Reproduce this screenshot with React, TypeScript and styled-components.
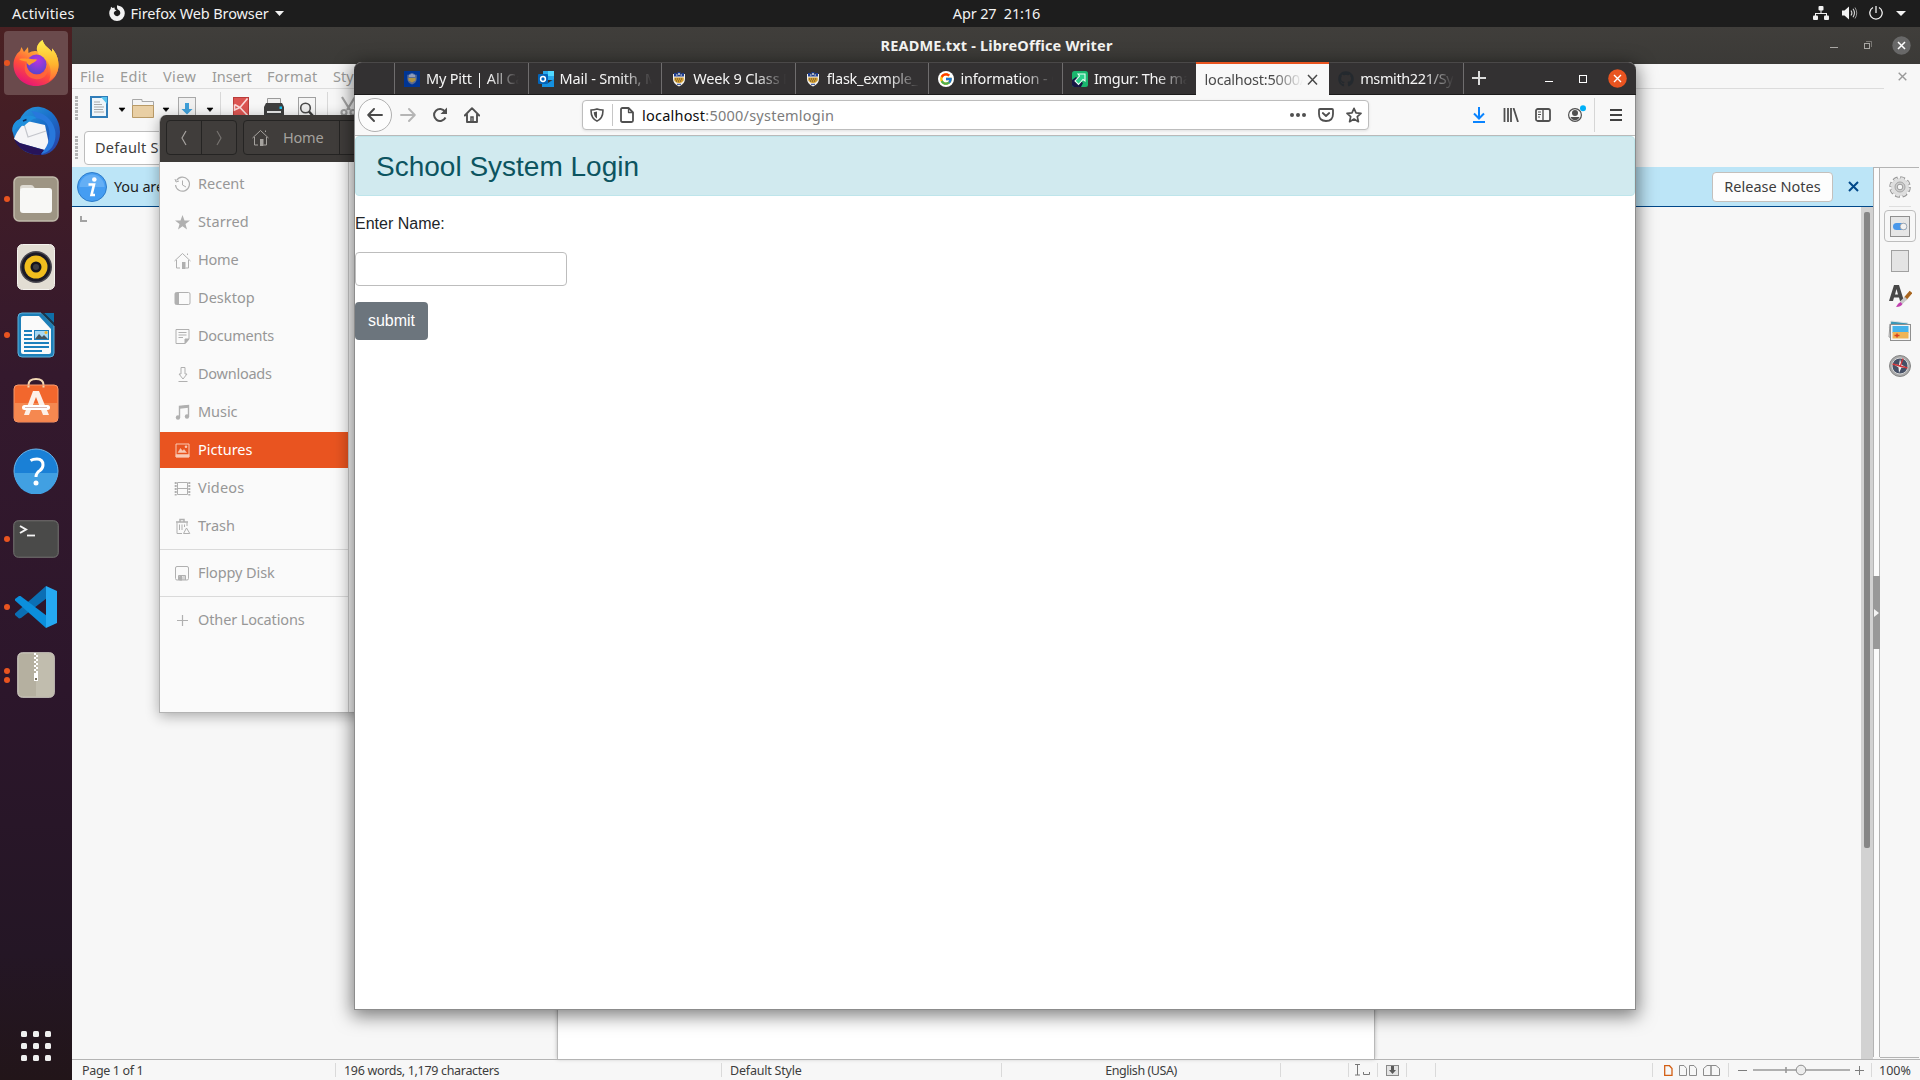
import React from "react";
import styled, { createGlobalStyle, css } from "styled-components";
import { FcGoogle } from "react-icons/fc";
import { FaGithub } from "react-icons/fa";

const Global = createGlobalStyle`
  html, body { margin: 0; padding: 0; overflow: hidden; background: #2c1628; }
  * { box-sizing: border-box; }
  svg { display: block; flex: none; }
`;

const UI_FONT = `"Noto Sans", "Open Sans", sans-serif`;

const Screen = styled.div`
  position: relative;
  width: 1920px;
  height: 1080px;
  overflow: hidden;
  display: flex;
  flex-direction: column;
  font-family: ${UI_FONT};
  font-size: 14.5px;
  line-height: 20px;
  white-space: pre;
`;

const Label = styled.span<{ $ls?: number }>`
  letter-spacing: ${(p) => p.$ls ?? 0}px;
  white-space: pre;
`;

/* ---------- Top panel ---------- */
const Panel = styled.header`
  height: 27px;
  flex: none;
  background: #1d1d1d;
  color: #f2f2f2;
  display: grid;
  grid-template-columns: 1fr auto 1fr;
  align-items: center;
  padding: 0 14px 1px 12px;
`;
const PanelLeft = styled.div`
  display: flex;
  align-items: center;
`;
const AppMenu = styled.div`
  display: flex;
  align-items: center;
  margin-left: 34px;
  gap: 6px;
`;
const Clock = styled.div`
  padding-left: 75px;
`;
const PanelRight = styled.div`
  display: flex;
  align-items: center;
  justify-content: flex-end;
`;
const Gap = styled.span<{ $w: number }>`
  flex: none;
  width: ${(p) => p.$w}px;
`;

/* ---------- Dock ---------- */
const Body = styled.div`
  flex: 1;
  display: flex;
  min-height: 0;
`;
const DockBar = styled.nav`
  width: 72px;
  flex: none;
  display: flex;
  flex-direction: column;
  align-items: center;
  padding: 4px 0 2px;
  gap: 4px;
  background: linear-gradient(#4a2022 0%, #3e1c28 17%, #34192d 33%, #2c162b 63%, #241625 88%, #221519 100%);
`;
const DockTile = styled.div<{ $active?: boolean; $last?: boolean }>`
  position: relative;
  width: 64px;
  height: 64px;
  border-radius: 4px;
  display: flex;
  align-items: center;
  justify-content: center;
  ${(p) => p.$active && css`background: #6a4a4c;`}
  ${(p) => p.$last && css`margin-top: auto;`}
`;
const RunDots = styled.div`
  position: absolute;
  left: 0;
  top: 0;
  bottom: 0;
  display: flex;
  flex-direction: column;
  justify-content: center;
  gap: 3px;
`;
const RunDot = styled.i`
  width: 6px;
  height: 6px;
  border-radius: 50%;
  background: #e95420;
`;

/* ---------- Writer ---------- */
const Writer = styled.main`
  flex: 1;
  min-width: 0;
  display: flex;
  flex-direction: column;
  background: #f7f7f7;
`;
const WriterTitle = styled.div`
  height: 37px;
  flex: none;
  display: grid;
  grid-template-columns: 1fr auto 1fr;
  align-items: center;
  padding: 0 9px 1px 0;
  background: linear-gradient(#403e3b, #3b3a37);
  color: #f4f4f2;
  font-weight: 700;
`;
const TitleText = styled.div`
  grid-column: 2;
  padding-left: 10px;
`;
const TitleButtons = styled.div`
  display: flex;
  justify-content: flex-end;
  align-items: center;
`;
const WriterMenu = styled.div`
  height: 24px;
  flex: none;
  display: flex;
  justify-content: space-between;
`;
const MenuItems = styled.div`
  width: 1812px;
  height: 25px;
  border-bottom: 1px solid #dcdcdc;
  display: flex;
  align-items: center;
  padding-left: 8px;
  color: #9b9b99;
`;
const MenuItem = styled.div<{ $w: number; $ls: number }>`
  width: ${(p) => p.$w}px;
  letter-spacing: ${(p) => p.$ls}px;
`;
const MenuClose = styled.div`
  width: 36px;
  display: flex;
  align-items: center;
  justify-content: center;
`;
const ToolRow = styled.div`
  height: 39px;
  flex: none;
  padding: 8px 0 0 3px;
  display: flex;
  align-items: flex-start;
`;
const ToolRule = styled.div`
  width: 1px;
  height: 32px;
  margin-top: -4px;
  background: #d8d8d8;
`;
const FormatRow = styled.div`
  height: 40px;
  flex: none;
  display: flex;
  align-items: center;
  padding: 1px 0 0 3px;
`;
const Handle = styled.div`
  width: 3px;
  height: 24px;
  background: repeating-linear-gradient(#b4b4b4 0 2.500px, #f7f7f7 2.500px 3.500px);
`;
const StyleBox = styled.div`
  margin-left: 6px;
  width: 240px;
  height: 34px;
  border: 1px solid #bdbdbd;
  border-radius: 4px;
  background: #fff;
  color: #3d3d3d;
  padding: 5px 10px;
`;
const Work = styled.div`
  flex: 1;
  display: flex;
  min-height: 0;
`;
const DocColumn = styled.div`
  width: 1801px;
  flex: none;
  display: flex;
  flex-direction: column;
`;
const InfoBar = styled.div`
  height: 40px;
  flex: none;
  background: #bce5f7;
  border-bottom: 1px solid #00488a;
  display: flex;
  align-items: center;
  padding: 0 12px 0 5px;
  color: #1c1c1c;
`;
const InfoText = styled.div`
  padding: 0 0 2px 7px;
  letter-spacing: -0.15px;
`;
const ReleaseButton = styled.div`
  margin-left: auto;
  width: 121px;
  height: 30px;
  border: 1px solid #c4c0bc;
  border-radius: 4px;
  background: #fdfdfd;
  color: #3d3d3d;
  text-align: center;
  line-height: 27px;
`;
const DocArea = styled.div`
  flex: 1;
  display: flex;
`;
const Corner = styled.div`
  width: 7px;
  height: 6px;
  margin: 9px 470px 0 8px;
  border-left: 2px solid #a3a3a3;
  border-bottom: 2px solid #a3a3a3;
`;
const Paper = styled.div`
  width: 818px;
  background: #fff;
  border-left: 1px solid #b9b9b9;
  border-right: 1px solid #b9b9b9;
  box-shadow: 0 0 4px rgba(0, 0, 0, 0.25);
`;
const ScrollTrack = styled.div`
  width: 12px;
  margin-left: auto;
  background: #d2d2d2;
  padding: 5px 3px 0;
`;
const ScrollThumb = styled.div`
  height: 636px;
  border-radius: 2px;
  background: #868686;
`;
const Splitter = styled.div`
  width: 7px;
  flex: none;
  background: #fcfcfc;
  border: 1px solid #b4b4b4;
  border-bottom: 0;
  margin-bottom: 2px;
  padding-top: 408px;
`;
const SplitGrip = styled.div`
  height: 73px;
  width: 7px;
  margin-left: -1px;
  background: #999;
  display: flex;
  align-items: center;
  justify-content: center;
`;
const SideDeck = styled.aside`
  flex: 1;
  border-top: 1px solid #b4b4b4;
  border-bottom: 1px solid #b4b4b4;
  margin: 0 1px 1px 0;
  display: flex;
  flex-direction: column;
  align-items: center;
  padding-top: 6px;
`;
const DeckTile = styled.div<{ $h: number; $on?: boolean }>`
  width: 32px;
  height: ${(p) => p.$h}px;
  display: flex;
  align-items: center;
  justify-content: center;
  border-radius: 4px;
  border: 1px solid ${(p) => (p.$on ? "#bdbdbd" : "transparent")};
`;
const DeckRule = styled.div`
  width: 22px;
  height: 1px;
  background: #dedede;
  margin: 6px 0 3px;
`;
const StatusBar = styled.footer`
  height: 21px;
  flex: none;
  border-top: 1px solid #b4b4b4;
  display: flex;
  align-items: center;
  color: #3d3d3d;
  font-size: 12.5px;
  line-height: 16px;
`;
const StatusCell = styled.div<{ $w: number; $center?: boolean; $pad?: number; $first?: boolean }>`
  width: ${(p) => p.$w}px;
  height: 14px;
  border-left: ${(p) => (p.$first ? 0 : 1)}px solid #dadada;
  padding-left: ${(p) => p.$pad ?? 0}px;
  display: flex;
  align-items: center;
  justify-content: ${(p) => (p.$center ? "center" : "flex-start")};
  span { padding-top: 2px; }
`;

/* ---------- Files window ---------- */
const FilesWindow = styled.section`
  position: absolute;
  left: 159px;
  top: 115px;
  width: 240px;
  height: 598px;
  border: 1px solid #b3b3b3;
  border-top: 0;
  border-radius: 7px 7px 0 0;
  background: #fafafa;
  box-shadow: 0 3px 14px rgba(0, 0, 0, 0.32);
  display: flex;
  flex-direction: column;
  overflow: hidden;
`;
const FilesHeader = styled.div`
  height: 47px;
  flex: none;
  background: #3d3a38;
  display: flex;
  align-items: center;
  padding: 0 0 2px 6px;
  gap: 6px;
`;
const HeaderGroup = styled.div`
  height: 35px;
  border: 1px solid #252423;
  border-radius: 4px;
  display: flex;
  background: #403d3b;
`;
const HeaderButton = styled.div<{ $w: number; $rule?: boolean }>`
  width: ${(p) => p.$w}px;
  display: flex;
  align-items: center;
  justify-content: center;
  color: #a5a29e;
  ${(p) => p.$rule && css`border-left: 1px solid #252423;`}
`;
const PathButton = styled(HeaderButton)`
  justify-content: flex-start;
  padding-left: 8px;
  gap: 14px;
  span { padding-bottom: 1px; }
`;
const Places = styled.div`
  width: 189px;
  flex: 1;
  border-right: 1px solid #cfcfcf;
  padding-top: 4px;
`;
const Place = styled.div<{ $on?: boolean }>`
  height: 36px;
  margin-bottom: 2px;
  display: flex;
  align-items: center;
  padding: 0 0 0 14px;
  gap: 7px;
  background: ${(p) => (p.$on ? "#e95420" : "transparent")};
  color: ${(p) => (p.$on ? "#fff" : "#979797")};
  span { padding-bottom: 3px; }
`;
const PlaceIcon = styled.svg.attrs({ width: 17, height: 17, viewBox: "0 0 17 17" })<{ $on?: boolean }>`
  fill: none;
  stroke: ${(p) => (p.$on ? "#f9c9b5" : "#b0b0b0")};
  color: ${(p) => (p.$on ? "#f9c9b5" : "#b0b0b0")};
`;
const PlaceRule = styled.div`
  height: 1px;
  background: #dadada;
  margin: 5px 0 5px;
`;

/* ---------- Browser window ---------- */
const Browser = styled.section`
  position: absolute;
  left: 354px;
  top: 62px;
  width: 1282px;
  height: 948px;
  border: 1px solid #8c8c8c;
  border-top: 0;
  border-radius: 8px 8px 0 0;
  box-shadow: 0 4px 18px 2px rgba(0, 0, 0, 0.5);
  background: #fff;
  display: flex;
  flex-direction: column;
`;
const TabStrip = styled.div`
  height: 33px;
  flex: none;
  margin: 0 -1px;
  padding-left: 40px;
  background: #333132;
  border-top: 1px solid #4a4848;
  border-bottom: 1px solid #1c1b1b;
  border-radius: 8px 8px 0 0;
  display: flex;
  color: #f5f5f5;
`;
const Tab = styled.div<{ $active?: boolean; $plain?: boolean }>`
  width: 133.6px;
  flex: none;
  display: flex;
  align-items: center;
  padding: 0 9px 0 9px;
  gap: 6px;
  border-left: ${(p) => (p.$active || p.$plain ? 0 : 1)}px solid #6f6d6e;
  ${(p) =>
    p.$active &&
    css`
      margin: -1px 0;
      border-top: 2px solid #e95420;
      background: #f8f8f8;
      color: #4a4a4a;
      gap: 1px;
    `}
`;
const TabTitle = styled.div<{ $ls: number }>`
  flex: 1;
  min-width: 0;
  overflow: hidden;
  padding-bottom: 2px;
  letter-spacing: ${(p) => p.$ls}px;
  mask-image: linear-gradient(to left, transparent 0, #000 30px);
`;
const NewTab = styled.div`
  border-left: 1px solid #6f6d6e;
  width: 32px;
  display: flex;
  align-items: center;
  justify-content: center;
  padding-bottom: 2px;
`;
const WindowButtons = styled.div`
  margin-left: auto;
  display: flex;
  align-items: center;
  padding-right: 9px;
`;
const NavBar = styled.div`
  height: 41px;
  flex: none;
  background: #f8f8f8;
  border-bottom: 1px solid #b9b9b9;
  display: flex;
  align-items: center;
  padding-left: 3px;
`;
const BackButton = styled.div`
  width: 34px;
  height: 34px;
  border: 1px solid #b0b0b0;
  border-radius: 50%;
  background: #fcfcfc;
  display: flex;
  align-items: center;
  justify-content: center;
`;
const UrlBar = styled.div`
  margin-left: 102px;
  width: 787px;
  height: 30px;
  border: 1px solid #bdbdbd;
  border-radius: 4px;
  background: #fff;
  box-shadow: 0 1px 3px rgba(0, 0, 0, 0.1);
  display: flex;
  align-items: center;
  padding: 0 6px 0 7px;
`;
const UrlText = styled.div`
  flex: 1;
  margin: 0 0 1px 8px;
  color: #7c7c7c;
`;
const UrlHost = styled.span`
  color: #0c0c0c;
  letter-spacing: 0.22px;
`;
const VRule = styled.div<{ $h: number; $c: string }>`
  width: 1px;
  height: ${(p) => p.$h}px;
  background: ${(p) => p.$c};
`;
const PageBody = styled.div`
  flex: 1;
  font-family: "Liberation Sans", Arial, sans-serif;
  font-size: 16px;
  line-height: 24px;
  color: #212529;
`;
const Alert = styled.div`
  height: 60px;
  border: 1px solid #bee5eb;
  border-radius: 4px;
  background: #d1eaef;
  color: #0c5460;
  padding: 13px 20px 0;
  font-size: 28px;
  line-height: 33.6px;
`;
const FieldLabel = styled.p`
  margin: 16px 0 16px;
`;
const Field = styled.input`
  display: block;
  width: 212px;
  height: 34px;
  border: 1px solid #bdbdbd;
  border-radius: 4px;
  background: #fff;
  padding: 0 8px;
`;
const Submit = styled.button`
  display: block;
  margin-top: 16px;
  width: 73px;
  height: 38px;
  padding: 0;
  border: 0;
  border-radius: 4px;
  background: #6c757d;
  color: #fff;
  font: 16px/24px "Liberation Sans", Arial, sans-serif;
`;

const Caret = ({ w = 9, h = 5, c = "#f2f2f2" }: { w?: number; h?: number; c?: string }) => (
  <svg width={w} height={h} viewBox="0 0 10 5" preserveAspectRatio="none"><path d="M0 0H10L5 5Z" fill={c} /></svg>
);

/* ---------- Dock icons ---------- */
const FirefoxIcon = () => (
  <svg width="46" height="48" viewBox="0 0 46 48">
    <defs>
      <linearGradient id="fx" x1="0.8" y1="0" x2="0.3" y2="1">
        <stop offset="0" stopColor="#fff44f" /><stop offset=".35" stopColor="#ffa436" /><stop offset=".65" stopColor="#ff4f3a" /><stop offset="1" stopColor="#e5127a" />
      </linearGradient>
      <radialGradient id="fxp" cx=".55" cy=".3" r=".8"><stop offset="0" stopColor="#b833e1" /><stop offset="1" stopColor="#4a47c8" /></radialGradient>
      <linearGradient id="fxy" x1="0" y1="0" x2="0" y2="1"><stop offset="0" stopColor="#fff14f" /><stop offset=".6" stopColor="#ffb32e" /><stop offset="1" stopColor="#ff6a3a" /></linearGradient>
    </defs>
    <path d="M23 47C10 47 .5 37 .5 26C.5 20 3 15 7 12L8.500 8L11 13L15 8L15.500 14C19 12 24 11 26 14C22 9 25 4 29.500 1C31 7 36 9 39 13V9.500C43.500 14 45.500 20 45.500 26C45.500 38 36 47 23 47Z" fill="url(#fx)" />
    <path d="M29.500 1C31 7 36 9 39 13V9.500C43.500 14 45.500 20 45.500 26C45.500 33 42 39 36 42C39 34 38 25 32 20C25 16 19 9 29.500 1Z" fill="url(#fxy)" />
    <circle cx="23.500" cy="25.500" r="10" fill="url(#fxp)" />
    <path d="M6 20C10 19 13 20 16 19.500C19 20.500 22 20 24 20.500C23 23.500 18 24 16.500 26.500C14.500 25 13.500 24 13.500 22.500C11 22 8 22 6 20Z" fill="#ff9a2c" />
    <path d="M13.500 22.500C12.500 30 18 36 25 35.500C31 35 34.500 31 34.500 26C37 34 31 41.500 22 40C13 39 9 30 13.500 22.500Z" fill="#ff6a38" opacity=".8" />
  </svg>
);
const ThunderbirdIcon = () => (
  <svg width="50" height="50" viewBox="0 0 50 50">
    <defs><linearGradient id="tb" x1="0" y1="0" x2="1" y2="1"><stop offset="0" stopColor="#2a9fe0" /><stop offset=".5" stopColor="#1a6fc9" /><stop offset="1" stopColor="#2b3aa0" /></linearGradient></defs>
    <path d="M2 27C0 20 4 15 9 13C13 5 20 0 29 1C41 3 49 13 49 26C49 38 42 48 31 49C20 49 6 46 2 27Z" fill="url(#tb)" />
    <path d="M3 33C6 24 12 18 16 15L34 19L38 38L34 44L8 37Z" fill="#f5f5f7" />
    <path d="M13 18L17 31L35 25" fill="none" stroke="#c4c6cc" strokeWidth="1.200" />
    <path d="M3 33L9 37L33 44L30 49C17 49 7 43 3 33Z" fill="#27145a" />
    <path d="M9 13C15 8 21 9 26 12C21 13 17 16 13 20C8 19 5 22 2 27C0 20 4 15 9 13Z" fill="#1f8fdc" />
    <path d="M25 12C35 13 40 20 38 33C37 39 34 43 30 48C42 46 46 34 44 24C41 13 33 6 20 5C22 7 24 9 25 12Z" fill="#2878dc" />
    <path d="M12 15L15.500 13.500" stroke="#0d2c5c" strokeWidth="1.600" />
  </svg>
);
const FilesIcon = () => (
  <svg width="46" height="46" viewBox="0 0 46 46">
    <rect x="1" y="1" width="44" height="44" rx="5" fill="#9e9584" stroke="#c1baab" strokeWidth="1.500" />
    <path d="M7 12Q7 9 10 9H18Q20 9 21 11L23 14H7Z" fill="#dedad2" />
    <rect x="7" y="12" width="32" height="25" rx="3" fill="#f8f8f6" />
  </svg>
);
const RhythmboxIcon = () => (
  <svg width="38" height="46" viewBox="0 0 38 46">
    <rect x=".5" y=".5" width="37" height="45" rx="5" fill="#e2ddd3" stroke="#f4f2ee" />
    <circle cx="19" cy="23" r="16" fill="#4a4850" /><circle cx="19" cy="23" r="14.500" fill="#1b1a26" /><circle cx="19" cy="23" r="11.500" fill="#f0bd1e" />
    <circle cx="19" cy="23" r="5.500" fill="#15151d" /><circle cx="19" cy="23" r="3" fill="#3d3d42" />
  </svg>
);
const WriterIcon = () => (
  <svg width="38" height="46" viewBox="0 0 38 46">
    <path d="M5 1H24L37 14V41Q37 45 33 45H5Q1 45 1 41V5Q1 1 5 1Z" fill="#1d7fb8" stroke="#5fb0d8" />
    <path d="M6 4H22L34 17V40Q34 42 32 42H6Q4 42 4 40V6Q4 4 6 4Z" fill="#fafafa" />
    <path d="M27 1H37V11Z" fill="#0f6fa8" /><path d="M24 1L37 14V11L27 1Z" fill="#17394f" />
    <g fill="#1c80bd"><path d="M7 18h8v2H7zM7 22h8v2H7zM7 26h8v2H7zM7 30h25v2H7zM7 34h25v2H7zM7 38h18v2H7z" /></g>
    <rect x="17" y="18" width="15" height="10" fill="#1c80bd" /><rect x="18" y="19" width="13" height="8" fill="#a7d8f2" />
    <path d="M18 27L22 22L25 25L27 23L31 27Z" fill="#44545c" /><circle cx="29" cy="20.500" r="1.500" fill="#f2b52c" />
  </svg>
);
const SoftwareIcon = () => (
  <svg width="46" height="52" viewBox="0 0 46 52">
    <path d="M15.500 9V8Q15.500 2 23 2T30.500 8V9" fill="none" stroke="#f3d9b4" strokeWidth="2" />
    <rect x="1" y="8" width="44" height="37" rx="4" fill="#f2672d" stroke="#f79b6e" />
    <path d="M1.500 26H44.500V41Q44.500 44.500 41 44.500H5Q1.500 44.500 1.500 41Z" fill="#f58850" />
    <path d="M15.500 8.500V10.500M30.500 8.500V10.500" stroke="#f3d9b4" strokeWidth="2" />
    <path d="M20 14H26L36 38H30L23 20L16 38H11Z" fill="#fdf0e8" />
    <rect x="9" y="28" width="28" height="5" rx="2.500" fill="#fff" /><path d="M12 30.500h22" stroke="#d9b9b4" strokeWidth="1" />
  </svg>
);
const HelpIcon = () => (
  <svg width="46" height="46" viewBox="0 0 46 46">
    <circle cx="23" cy="23" r="22" fill="#1a80d6" stroke="#6ab5ea" />
    <path d="M1.500 25H44.500A21.500 21.500 0 0 1 1.500 25Z" fill="#41a0e2" />
    <path d="M17.500 12.500Q20 11 24 11Q30 11 30 17Q30 20 27 22.500Q23 25 23 29" fill="none" stroke="#fff" strokeWidth="3" />
    <circle cx="23" cy="35" r="2.500" fill="#fff" />
  </svg>
);
const TerminalIcon = () => (
  <svg width="46" height="38" viewBox="0 0 46 38">
    <rect x=".75" y=".75" width="44.500" height="36.500" rx="4.500" fill="#4a4a49" stroke="#747472" />
    <path d="M7 6L13 9.500L7 13" fill="none" stroke="#f4f4f4" strokeWidth="2" /><path d="M14 15.500h8" stroke="#f4f4f4" strokeWidth="1.800" />
  </svg>
);
const CodeIcon = () => (
  <svg width="44" height="44" viewBox="0 0 44 44">
    <path d="M32 1L1 28.500V30L5 33.500L7 33L33 13Z" fill="#0b6fb4" />
    <path d="M1 14V15.500L32 43L33 31L6.500 11L5 11Z" fill="#0b8fdc" />
    <path d="M32 1L43 6V38L32 43Z" fill="#25a9f2" />
  </svg>
);
const ArchiveIcon = () => (
  <svg width="38" height="46" viewBox="0 0 38 46">
    <rect x=".75" y=".75" width="36.500" height="44.500" rx="4.500" fill="#b5b0a0" stroke="#d8d5cb" />
    <path d="M19 1.500H33Q36.500 1.500 36.500 5V41Q36.500 44.500 33 44.500H19Z" fill="#c1bdae" />
    {[0, 1, 2, 3, 4].map((i) => <path key={i} d={`M17 ${1 + i * 4}h2v2h-2zM19 ${3 + i * 4}h2v2h-2z`} fill="#fff" />)}
    <path d="M17 21h4v8h-4z" fill="#fff" /><path d="M18 26h2v2h-2z" fill="#77705f" />
  </svg>
);
const GridIcon = () => (
  <svg width="30" height="30" viewBox="0 0 30 30">
    {[0, 12, 24].map((y) => [0, 12, 24].map((x) => <rect key={`${x}-${y}`} x={x} y={y} width="6" height="6" rx="1.500" fill="#efefef" />))}
  </svg>
);
const DOCK: { icon: React.ReactNode; dots: number; active?: boolean }[] = [
  { icon: <FirefoxIcon />, dots: 1, active: true },
  { icon: <ThunderbirdIcon />, dots: 0 },
  { icon: <FilesIcon />, dots: 1 },
  { icon: <RhythmboxIcon />, dots: 0 },
  { icon: <WriterIcon />, dots: 1 },
  { icon: <SoftwareIcon />, dots: 0 },
  { icon: <HelpIcon />, dots: 0 },
  { icon: <TerminalIcon />, dots: 1 },
  { icon: <CodeIcon />, dots: 1 },
  { icon: <ArchiveIcon />, dots: 2 },
];

function Dock() {
  return (
    <DockBar>
      {DOCK.map((d, i) => (
        <DockTile key={i} $active={d.active}>
          {d.dots > 0 && <RunDots>{Array.from({ length: d.dots }, (_, k) => <RunDot key={k} />)}</RunDots>}
          {d.icon}
        </DockTile>
      ))}
      <DockTile $last><GridIcon /></DockTile>
    </DockBar>
  );
}

function TopPanel() {
  return (
    <Panel>
      <PanelLeft>
        <Label $ls={0.22}>Activities</Label>
        <AppMenu>
          <svg width="16" height="16" viewBox="0 0 16 16">
            <path d="M8 1.500V.2L12 1.600Q15.800 4 15.800 8.300A7.800 7.600 0 0 1 .2 8.300Q.2 5.500 1.700 3.700L2 1.800L3.600 3L5.500 2.500L5.800 4.500L7.600 5.200L5.600 6.400Q4.300 7.500 5 9A3.300 3.300 0 0 0 11.300 8.600Q11.500 5.500 8.800 4.500Q7.800 3.500 8 1.500Z" fill="#f2f2f2" />
          </svg>
          <Label $ls={-0.12}>Firefox Web Browser</Label>
          <Caret />
        </AppMenu>
      </PanelLeft>
      <Clock><Label $ls={-0.13}>Apr 27  21:16</Label></Clock>
      <PanelRight>
        <svg width="16" height="14" viewBox="0 0 16 14" fill="#f2f2f2"><rect x="5.500" width="5" height="4.500" rx="1" /><rect y="9.500" width="5" height="4.500" rx="1" /><rect x="11" y="9.500" width="5" height="4.500" rx="1" /><path d="M7.500 4h1v3H14v3h-1V8H3v2H2V7h5.500z" /></svg>
        <Gap $w={13} />
        <svg width="16" height="14" viewBox="0 0 16 14"><path d="M0 4.500H2.500L7 .5V13.500L2.500 9.500H0Z" fill="#f2f2f2" /><path d="M9 4.500Q10.800 7 9 9.500M11 2.800Q14 7 11 11.200" fill="none" stroke="#d5d5d5" strokeWidth="1.100" /><path d="M13 1.500Q16.500 7 13 12.500" fill="none" stroke="#999" strokeWidth="1" /></svg>
        <Gap $w={11} />
        <svg width="14" height="14" viewBox="0 0 14 14" fill="none" stroke="#f2f2f2" strokeWidth="1.300"><path d="M4 1.500A6.200 6.200 0 1 0 10 1.500M7 0V7" /></svg>
        <Gap $w={13} />
        <Caret w={10} />
      </PanelRight>
    </Panel>
  );
}

const ToolCaret = () => (
  <svg width="8" height="18" viewBox="0 0 8 18"><path d="M1 12H7L4 15.500Z" fill="#000" stroke="#000" strokeWidth=".6" /></svg>
);

function WriterToolbar() {
  return (
    <ToolRow>
      <Handle />
      <Gap $w={12} />
      <svg width="18" height="22" viewBox="0 0 18 22"><rect x="1" y="1" width="16" height="20" fill="#eef5fa" stroke="#2f7cb8" strokeWidth="2" /><path d="M11 1H17V8Z" fill="#55c2ee" /><path d="M4 6h6M4 8.500h8M4 11h10M4 13.500h9M4 16h10" stroke="#a9a9a9" /></svg>
      <Gap $w={10} />
      <ToolCaret />
      <Gap $w={6} />
      <svg width="22" height="24" viewBox="0 0 22 24"><path d="M.5 20V3.500H10V5.500H21.500V12H.5Z" fill="#f4f4f4" stroke="#a8a8a8" /><path d="M.5 9.500H21.500V21.500H.5Z" fill="#e9cfa4" stroke="#b99a66" /></svg>
      <Gap $w={8} />
      <ToolCaret />
      <Gap $w={8} />
      <svg width="18" height="24" viewBox="0 0 18 24"><rect x=".5" y="1.500" width="17" height="22" fill="#f0f0f0" stroke="#a8a8a8" /><path d="M7 7h4v6h3.500L9 18.500L3.500 13H7Z" fill="#3f9fd8" /></svg>
      <Gap $w={10} />
      <ToolCaret />
      <Gap $w={6} />
      <ToolRule />
      <Gap $w={12} />
      <svg width="16" height="24" viewBox="0 0 16 24"><rect x=".5" y="1.500" width="15" height="22" fill="#dc5552" stroke="#b93c3a" /><path d="M1.500 8.500L7 11.500L14.500 2.500M7 11.500L15 20M1.500 8.500V14L7 11.500" stroke="#fbdcdb" strokeWidth="1.600" fill="none" /></svg>
      <Gap $w={15} />
      <svg width="20" height="24" viewBox="0 0 20 24"><path d="M3.500 10V2.500H16.500V10" fill="#efefef" stroke="#9a9a9a" /><path d="M2 7H18L20 11V22H0V11Z" fill="#3f3f3f" /><path d="M3 15h14v2H3z" fill="#e8e8e8" /><rect x="15.500" y="10.500" width="2.500" height="2.500" fill="#16c3f2" /></svg>
      <Gap $w={14} />
      <svg width="18" height="24" viewBox="0 0 18 24"><rect x=".5" y="1.500" width="17" height="22" fill="#f5f5f5" stroke="#a0a0a0" /><circle cx="7.500" cy="12" r="4.800" fill="#eee" stroke="#4a4a4a" strokeWidth="1.600" /><path d="M11 15.500L15 20" stroke="#3a3a3a" strokeWidth="2.500" /></svg>
      <Gap $w={11} />
      <ToolRule />
      <Gap $w={12} />
      <svg width="18" height="24" viewBox="0 0 18 24" fill="none" stroke="#a6a6a6" strokeWidth="2.200"><path d="M2 1L10 14M15 1L7 14" /><circle cx="4" cy="16.500" r="2.500" /><circle cx="13" cy="16.500" r="2.500" /></svg>
    </ToolRow>
  );
}

function SideIcons() {
  return (
    <SideDeck>
      <DeckTile $h={26}>
        <svg width="22" height="22" viewBox="0 0 22 22"><circle cx="11" cy="11" r="8.800" fill="#dadada" stroke="#939393" strokeWidth="4" strokeDasharray="4.400 2.510" /><circle cx="11" cy="11" r="8.800" fill="#dadada" stroke="#e2e2e2" strokeWidth="2.200" strokeDasharray="3 3.910" strokeDashoffset="-.7" /><circle cx="11" cy="11" r="8" fill="#dedede" /><circle cx="11" cy="11" r="5" fill="#cfcfcf" stroke="#a5a5a5" /><circle cx="11" cy="11" r="2.800" fill="#f7f7f7" stroke="#9a9a9a" /></svg>
      </DeckTile>
      <DeckRule />
      <DeckTile $h={32} $on>
        <svg width="20" height="21" viewBox="0 0 20 21"><rect x=".5" y=".5" width="19" height="20" fill="#e6e6e6" stroke="#8f8f8f" /><rect x="3" y="7" width="14" height="7" rx="3.500" fill="#4a98ea" /><circle cx="13.500" cy="10.500" r="3.300" fill="#f2f2f2" stroke="#999" strokeWidth=".7" /></svg>
      </DeckTile>
      <DeckTile $h={38}>
        <svg width="18" height="22" viewBox="0 0 18 22"><rect x=".5" y=".5" width="17" height="21" fill="#e4e4e4" stroke="#a0a0a0" /></svg>
      </DeckTile>
      <DeckTile $h={32}>
        <svg width="24" height="24" viewBox="0 0 24 24"><path d="M1 17L6 1H11L16 17H12L11 13.500H6L5 17ZM7 10.500H10L8.500 5Z" fill="#484848" /><path d="M23 8L17 15" stroke="#a8651f" strokeWidth="3.500" /><path d="M18 14L13 19" stroke="#c8c8c8" strokeWidth="3.500" /><path d="M8 23Q10 19 12.500 18L14.500 20Q13 23 8 23Z" fill="#c03fae" /></svg>
      </DeckTile>
      <DeckTile $h={38}>
        <svg width="24" height="22" viewBox="0 0 24 22"><path d="M3 1L20 3V8H1Z" fill="#3b96b5" stroke="#e4e4e4" /><path d="M2 4L1 17L4 18" fill="none" stroke="#999" /><rect x="2.500" y="4.500" width="20" height="16" fill="#f4f4f4" stroke="#8f8f8f" /><rect x="4.500" y="6" width="16" height="7" fill="#45b2ea" /><rect x="4.500" y="12" width="16" height="6.500" fill="#efb455" /><path d="M6.500 15.500h5M9 13.500v4" stroke="#d8401f" strokeWidth="1.500" /></svg>
      </DeckTile>
      <DeckTile $h={32}>
        <svg width="22" height="22" viewBox="0 0 22 22"><circle cx="11" cy="11" r="10.500" fill="#a9a9a9" stroke="#858585" /><circle cx="11" cy="11" r="8" fill="#465066" stroke="#d8d8d8" /><path d="M11 4L12.500 9.500L18 13L12.500 12.500L10 18L9.500 12.500L4 9L10 10Z" fill="#f1f1f1" /><path d="M3.500 9L18.500 13M14 3.500L11 12" stroke="#d2353a" strokeWidth="1.300" /></svg>
      </DeckTile>
    </SideDeck>
  );
}

function WriterStatus() {
  return (
    <StatusBar>
      <StatusCell $w={263} $pad={10} $first><Label $ls={-0.35}>Page 1 of 1</Label></StatusCell>
      <StatusCell $w={386} $pad={8}><Label $ls={-0.32}>196 words, 1,179 characters</Label></StatusCell>
      <StatusCell $w={280} $pad={8}><Label $ls={-0.2}>Default Style</Label></StatusCell>
      <StatusCell $w={279} $center><Label $ls={-0.43}>English (USA)</Label></StatusCell>
      <StatusCell $w={68} />
      <StatusCell $w={29} $center><svg width="16" height="12" viewBox="0 0 16 12" fill="none" stroke="#777"><path d="M0 .5H5M2.500 .5V11M0 11H5M8.500 8V10.500H14.500V8" /></svg></StatusCell>
      <StatusCell $w={29} $center><svg width="13" height="11" viewBox="0 0 13 11"><rect x=".5" y=".5" width="12" height="10" fill="#e3e3e3" stroke="#8a8a8a" /><path d="M5 1h3v4h2L6.500 9L3 5h2z" fill="#5a5a5a" /></svg></StatusCell>
      <StatusCell $w={29} />
      <StatusCell $w={217} />
      <StatusCell $w={76} $pad={11}>
        <svg width="56" height="11" viewBox="0 0 56 11" fill="none" stroke="#8c8c8c">
          <path d="M.7 .7H5.500L8 3.500V10.300H.7Z" stroke="#d35f14" strokeWidth="1.300" />
          <path d="M15.500 .5H20L22.500 3.500V10.500H15.500ZM25.500 .5H30L32.500 3.500V10.500H25.500ZM47 .5H43L39.500 3.500V10.500H47ZM47 .5H52L55.500 3.500V10.500H47Z" />
        </svg>
      </StatusCell>
      <StatusCell $w={143} $pad={9}>
        <svg width="127" height="12" viewBox="0 0 127 12" fill="none" stroke="#7d7d7d">
          <path d="M0 6.500H9M117 6.500H126M121.500 2V11" /><path d="M15 6H112" stroke="#989898" strokeWidth="1.600" /><path d="M48 3V9" stroke="#989898" strokeWidth="1.600" /><circle cx="63" cy="6" r="4.800" fill="#ececec" stroke="#8f8f8f" />
        </svg>
      </StatusCell>
      <StatusCell $w={49} $pad={7}><Label>100%</Label></StatusCell>
    </StatusBar>
  );
}

function WriterWindow() {
  return (
    <Writer>
      <WriterTitle>
        <TitleText><Label $ls={0.17}>README.txt - LibreOffice Writer</Label></TitleText>
        <TitleButtons>
          <svg width="8" height="5" viewBox="0 0 8 5"><path d="M0 4.500H8" stroke="#a9a7a4" /></svg>
          <Gap $w={26} />
          <svg width="8" height="8" viewBox="0 0 8 8" fill="none" stroke="#a9a7a4"><path d="M2 .5H7.500V6" opacity=".55" /><rect x=".5" y="2.500" width="5" height="5" /></svg>
          <Gap $w={20} />
          <svg width="19" height="19" viewBox="0 0 19 19"><circle cx="9.500" cy="9.500" r="9.200" fill="#686868" /><path d="M6 6L13 13M13 6L6 13" stroke="#fff" strokeWidth="1.500" /></svg>
        </TitleButtons>
      </WriterTitle>
      <WriterMenu>
        <MenuItems>
          <MenuItem $w={40} $ls={0.3}>File</MenuItem>
          <MenuItem $w={43} $ls={0.35}>Edit</MenuItem>
          <MenuItem $w={49} $ls={0.4}>View</MenuItem>
          <MenuItem $w={55} $ls={-0.1}>Insert</MenuItem>
          <MenuItem $w={66} $ls={0.2}>Format</MenuItem>
          <MenuItem $w={60} $ls={0}>Styles</MenuItem>
        </MenuItems>
        <MenuClose><svg width="9" height="9" viewBox="0 0 9 9"><path d="M.7 .7L8.300 8.300M8.300 .7L.7 8.300" stroke="#999" strokeWidth="1.400" /></svg></MenuClose>
      </WriterMenu>
      <WriterToolbar />
      <FormatRow><Handle /><StyleBox><Label $ls={0.25}>Default Style</Label></StyleBox></FormatRow>
      <Work>
        <DocColumn>
          <InfoBar>
            <svg width="30" height="30" viewBox="0 0 30 30"><circle cx="15" cy="15" r="14.500" fill="#459df2" stroke="#2e7cc9" /><path d="M2.500 15A12.500 12.500 0 0 1 27.500 15Z" fill="#64aff5" /><circle cx="17.300" cy="7.500" r="2.300" fill="#fff" /><path d="M11.500 12.500H17L14.500 23H18" fill="none" stroke="#fff" strokeWidth="2.600" /></svg>
            <InfoText>You are</InfoText>
            <ReleaseButton><Label>Release Notes</Label></ReleaseButton>
            <Gap $w={15} />
            <svg width="11" height="11" viewBox="0 0 11 11"><path d="M1 1L10 10M10 1L1 10" stroke="#00488a" strokeWidth="2" /></svg>
            <Gap $w={2} />
          </InfoBar>
          <DocArea>
            <Corner />
            <Paper />
            <ScrollTrack><ScrollThumb /></ScrollTrack>
          </DocArea>
        </DocColumn>
        <Splitter><SplitGrip><svg width="5" height="8" viewBox="0 0 5 8"><path d="M0 0L5 4L0 8Z" fill="#f4f4f4" /></svg></SplitGrip></Splitter>
        <SideIcons />
      </Work>
      <WriterStatus />
    </Writer>
  );
}

/* ---------- Files ---------- */
const HOME_PATH = "M.5 9L8.500 1.500L16.500 9M2.500 8V16H6M13.500 3V1.500M14.500 8V16H11.500";
const PLACES: { name: string; ls: number; on?: boolean; icon: React.ReactNode }[] = [
  { name: "Recent", ls: 0, icon: <><path d="M2.500 4.500A7 7 0 1 1 1.500 9" strokeWidth="1.200" /><path d="M8.500 4.500V9L12 11" /><path d="M1 3L2 6L5 5" /></> },
  { name: "Starred", ls: 0.1, icon: <path d="M8.500 1L10.500 6.500H16L11.500 10L13 15.500L8.500 12.200L4 15.500L5.500 10L1 6.500H6.500Z" fill="currentColor" stroke="none" /> },
  { name: "Home", ls: -0.2, icon: <><path d={HOME_PATH} /><rect x="8.500" y="10.500" width="2.500" height="6" fill="currentColor" /></> },
  { name: "Desktop", ls: 0.05, icon: <><rect x="1" y="2.500" width="15" height="12" rx="1.500" /><path d="M1.500 3H4.500V14H1.500Z" fill="currentColor" /></> },
  { name: "Documents", ls: -0.25, icon: <><path d="M2 1.500H15V11L11 15.500H2Z" /><path d="M15 11H11V15.500Z" fill="currentColor" /><path d="M4.500 4.500H12.500M4.500 7H12.500M4.500 9.500H9" /></> },
  { name: "Downloads", ls: -0.25, icon: <><path d="M7 1.500H11V8H13L9 13L5 8H7Z" /><path d="M4.500 15.500H13.500" /></> },
  { name: "Music", ls: -0.05, icon: <><path d="M5.500 13V2.500L14.500 1.500V12" strokeWidth="1.400" /><path d="M5.500 3.500L14.500 2.500" strokeWidth="2.500" /><circle cx="4" cy="13.500" r="2.200" fill="currentColor" stroke="none" /><circle cx="13" cy="12.500" r="2.200" fill="currentColor" stroke="none" /></> },
  { name: "Pictures", ls: 0, on: true, icon: <><path d="M2 2H15V15H2Z" /><path d="M2 12.500H15V15H2ZM4 10.500L6.500 6.500L8.500 9L10 7.500L12.500 10.500Z" fill="currentColor" strokeWidth=".5" /><circle cx="12" cy="4.800" r="1.300" fill="currentColor" stroke="none" /></> },
  { name: "Videos", ls: 0.2, icon: <><path d="M3.500 2.500H13.500V14.500H3.500ZM3.500 8.500H13.500" /><path d="M1.700 2V15.500M15.300 2V15.500" strokeWidth="2" strokeDasharray="2 1" /></> },
  { name: "Trash", ls: -0.05, icon: <><path d="M2 4H14M6 3.500V1.500H10V3.500" strokeWidth="1.500" /><path d="M3 4.500V15.500H8M13 4.500V8" /><path d="M5.500 6.500V12M8 6.500V12M10.500 6.500V9" /><path d="M9.500 15.500L12.500 10L15.800 15.500Z" /></> },
];
const EXTRA = {
  floppy: <><path d="M3 1.500H13Q14.500 1.500 14.500 3V13.500Q14.500 15 13 15H3Q1.500 15 1.500 13.500V3Q1.500 1.500 3 1.500Z" /><path d="M4.500 15V10.500H11.500V15" /><path d="M5.500 15V11.500H8V15ZM10 11V15" fill="currentColor" /></>,
  plus: <path d="M8.500 3V14M3 8.500H14" strokeWidth="1.200" />,
};

function Files() {
  return (
    <FilesWindow>
      <FilesHeader>
        <HeaderGroup>
          <HeaderButton $w={34}><svg width="6" height="16" viewBox="0 0 6 16"><path d="M5 1L1 8L5 15" fill="none" stroke="#a5a29e" strokeWidth="1.200" /></svg></HeaderButton>
          <HeaderButton $w={35} $rule><svg width="6" height="16" viewBox="0 0 6 16"><path d="M1 1L5 8L1 15" fill="none" stroke="#75726f" strokeWidth="1.200" /></svg></HeaderButton>
        </HeaderGroup>
        <HeaderGroup>
          <PathButton $w={95}>
            <svg width="17" height="17" viewBox="0 0 17 17" fill="none" stroke="#a5a29e"><path d={HOME_PATH} /><rect x="8.500" y="10.500" width="2.500" height="6" fill="#a5a29e" /></svg>
            <Label $ls={-0.2}>Home</Label>
          </PathButton>
          <HeaderButton $w={60} $rule />
        </HeaderGroup>
      </FilesHeader>
      <Places>
        {PLACES.map((p) => (
          <Place key={p.name} $on={p.on}><PlaceIcon $on={p.on}>{p.icon}</PlaceIcon><Label $ls={p.ls}>{p.name}</Label></Place>
        ))}
        <PlaceRule />
        <Place><PlaceIcon>{EXTRA.floppy}</PlaceIcon><Label $ls={-0.1}>Floppy Disk</Label></Place>
        <PlaceRule />
        <Place><PlaceIcon>{EXTRA.plus}</PlaceIcon><Label $ls={-0.13}>Other Locations</Label></Place>
      </Places>
    </FilesWindow>
  );
}

/* ---------- Browser ---------- */
const Crest = ({ bg }: { bg?: boolean }) => (
  <svg width="16" height="16" viewBox="0 0 16 16">
    {bg && <rect width="16" height="16" fill="#003594" />}
    <path d="M2 3H14V8Q14 13 8 15.500Q2 13 2 8Z" fill={bg ? "#5b6c93" : "#f3f1ea"} transform={bg ? "translate(1.800 1.500) scale(.78)" : undefined} />
    <path d={bg ? "M5 3.500h1.500v-1h3v1H11V6H5z" : "M3 2h2l1.500 1V1h3v2L11 2h2v3.500H3z"} fill={bg ? "#8d9bbd" : "#1e3f93"} />
    {!bg && <path d="M5 3.500h1.500v1H5zM9.500 3.500H11v1H9.500zM7.300 2h1.400v2H7.300z" fill="#e9e4d2" />}
    <path d={bg ? "M4.500 7H11.500V9.500L8 11.500L4.500 9.500Z" : "M3.300 6.500H12.700V9.500Q11 12 8 12Q5 12 3.300 9.500Z"} fill={bg ? "#b09444" : "#cf9a2c"} />
    {!bg && <path d="M4 8h8M5 10h6" stroke="#5a4a35" strokeDasharray="1 1" />}
    {!bg && <path d="M6 13.300h4" stroke="#1e3f93" />}
  </svg>
);
const OutlookIcon = () => (
  <svg width="16" height="16" viewBox="0 0 16 16"><rect x="5" width="11" height="9" fill="#28a8ea" /><rect x="10" width="6" height="5" fill="#50d9ff" /><path d="M4 8L10 12L16 8V16H4Z" fill="#1490df" /><rect y="3" width="10" height="10" rx="1" fill="#0364b8" /><circle cx="5" cy="8" r="2.400" fill="none" stroke="#fff" strokeWidth="1.500" /></svg>
);
const ImgurIcon = () => (
  <svg width="16" height="16" viewBox="0 0 16 16"><rect width="16" height="16" rx="2.500" fill="#1bb76e" /><path d="M0 9L4 6L11 12L9 16H2.500Q0 16 0 13.500Z" fill="#171544" /><path d="M6 3H13V10L11 8.500L6.500 13.500L3 10L7.500 5Z" fill="#2bd18b" stroke="#e9fff4" strokeWidth="1.100" /></svg>
);
const GoogleBadge = styled.div`
  width: 16px;
  height: 16px;
  flex: none;
  border-radius: 50%;
  background: #fff;
  display: flex;
  align-items: center;
  justify-content: center;
`;
const TABS: { title: string; ls: number; icon: React.ReactNode }[] = [
  { title: "My Pitt | All Ca", ls: -0.2, icon: <Crest bg /> },
  { title: "Mail - Smith, Mi", ls: -0.2, icon: <OutlookIcon /> },
  { title: "Week 9 Class Re", ls: -0.15, icon: <Crest /> },
  { title: "flask_exmple_r", ls: -0.25, icon: <Crest /> },
  { title: "information - G", ls: -0.17, icon: <GoogleBadge><FcGoogle size={14} /></GoogleBadge> },
  { title: "Imgur: The mag", ls: -0.32, icon: <ImgurIcon /> },
];

function BrowserWindow() {
  return (
    <Browser>
      <TabStrip>
        {TABS.map((t) => (
          <Tab key={t.title}>{t.icon}<TabTitle $ls={t.ls}>{t.title}</TabTitle></Tab>
        ))}
        <Tab $active>
          <TabTitle $ls={-0.22}>localhost:5000/s</TabTitle>
          <svg width="16" height="12" viewBox="0 0 16 12"><path d="M4 1L13 10.500M13 1L4 10.500" stroke="#4a4a4a" strokeWidth="1.500" /></svg>
        </Tab>
        <Tab $plain><FaGithub size={16} color="#24292e" /><TabTitle $ls={-0.38}>msmith221/Syst</TabTitle></Tab>
        <NewTab><svg width="14" height="14" viewBox="0 0 14 14"><path d="M7 0V14M0 7H14" stroke="#dcdcdc" strokeWidth="2" /></svg></NewTab>
        <WindowButtons>
          <svg width="8" height="6" viewBox="0 0 8 6"><path d="M0 5.500H8" stroke="#fff" /></svg>
          <Gap $w={26} />
          <svg width="8" height="8" viewBox="0 0 8 8"><rect x=".5" y=".5" width="7" height="7" fill="none" stroke="#fff" /></svg>
          <Gap $w={21} />
          <svg width="19" height="19" viewBox="0 0 19 19"><circle cx="9.500" cy="9.500" r="9.300" fill="#e95420" /><path d="M6 6L13 13M13 6L6 13" stroke="#fff" strokeWidth="1.400" /></svg>
        </WindowButtons>
      </TabStrip>
      <NavBar>
        <BackButton><svg width="16" height="14" viewBox="0 0 16 14" fill="none" stroke="#4a4a4a" strokeWidth="1.900" strokeLinecap="round" strokeLinejoin="round"><path d="M7 1L1.200 7L7 13M1.500 7H15" /></svg></BackButton>
        <Gap $w={8} />
        <svg width="16" height="14" viewBox="0 0 16 14" fill="none" stroke="#b5b5b5" strokeWidth="1.900" strokeLinecap="round" strokeLinejoin="round"><path d="M9 1L14.800 7L9 13M14.500 7H1" /></svg>
        <Gap $w={16} />
        <svg width="16" height="16" viewBox="0 0 16 16" fill="none" stroke="#505050" strokeWidth="2"><path d="M13 4.500A6 6 0 1 0 13.500 10.500" /><path d="M15 .5V7H8.500Z" fill="#505050" stroke="none" /></svg>
        <Gap $w={16} />
        <svg width="16" height="16" viewBox="0 0 16 16" fill="none" stroke="#505050" strokeWidth="1.900"><path d="M.8 8.500L8 1.200L15.200 8.500M3 7.500V15H13V7.500" strokeLinejoin="round" strokeLinecap="round" /><path d="M7 14.500V10H9V14.500" strokeWidth="1.500" /></svg>
        <UrlBar>
          <svg width="14" height="14" viewBox="0 0 14 14"><path d="M7 .9Q10 2 12.900 2Q13.300 10 7 13.100Q.7 10 1.100 2Q4 2 7 .9Z" fill="none" stroke="#505050" strokeWidth="1.600" /><path d="M7 3.500V10.500Q4 9 3.700 4.300Z" fill="#505050" /></svg>
          <Gap $w={8} />
          <VRule $h={22} $c="#c6c6c6" />
          <Gap $w={7} />
          <svg width="14" height="16" viewBox="0 0 14 16" fill="none" stroke="#505050" strokeWidth="1.800" strokeLinejoin="round"><path d="M1 2.500Q1 1 2.500 1H8.500L13 5.500V13.500Q13 15 11.500 15H2.500Q1 15 1 13.500Z" /><path d="M8.500 1V5.500H13" strokeWidth="1.300" /></svg>
          <UrlText><UrlHost>localhost</UrlHost><Label $ls={0.24}>:5000/systemlogin</Label></UrlText>
          <svg width="16" height="4" viewBox="0 0 16 4" fill="#505050"><circle cx="2" cy="2" r="2" /><circle cx="8" cy="2" r="2" /><circle cx="14" cy="2" r="2" /></svg>
          <Gap $w={12} />
          <svg width="16" height="14" viewBox="0 0 16 14" fill="none" stroke="#505050" strokeWidth="1.800" strokeLinecap="round" strokeLinejoin="round"><path d="M2 1H14Q15 1 15 2V6Q15 13 8 13Q1 13 1 6V2Q1 1 2 1Z" /><path d="M4.800 5L8 8L11.200 5" /></svg>
          <Gap $w={12} />
          <svg width="16" height="16" viewBox="0 0 16 16"><path d="M8 1.300L10 5.800L15 6.300L11.300 9.600L12.400 14.700L8 12.100L3.600 14.700L4.700 9.600L1 6.300L6 5.800Z" fill="none" stroke="#505050" strokeWidth="1.700" strokeLinejoin="round" /></svg>
        </UrlBar>
        <Gap $w={104} />
        <svg width="12" height="16" viewBox="0 0 12 16" fill="none" stroke="#0a84ff" strokeWidth="2"><path d="M6 0V11M1 6.500L6 11.500L11 6.500M0 15H12" /></svg>
        <Gap $w={18} />
        <svg width="16" height="14" viewBox="0 0 16 14" stroke="#505050" strokeWidth="1.800"><path d="M1.500 0V14M5 0V14M8 0V14M10.500 0L15 14" /></svg>
        <Gap $w={16} />
        <svg width="16" height="14" viewBox="0 0 16 14" fill="none" stroke="#505050" strokeWidth="1.800"><rect x="1" y="1" width="14" height="12" rx="1.800" /><path d="M8 1V13" strokeWidth="1.400" /><path d="M3 4H6M3 6.500H6M3 9H5" strokeWidth="1" /></svg>
        <Gap $w={17} />
        <svg width="18" height="20" viewBox="0 0 18 20"><circle cx="7" cy="10" r="6.400" fill="none" stroke="#505050" strokeWidth="1.200" /><circle cx="7" cy="8" r="3" fill="#505050" /><path d="M2.500 12H11.500Q10 15.300 7 15.300Q4 15.300 2.500 12Z" fill="#505050" /><circle cx="15" cy="3.200" r="3" fill="#00b0f8" /></svg>
        <Gap $w={8} />
        <VRule $h={34} $c="#d6d6d6" />
        <Gap $w={15} />
        <svg width="12" height="12" viewBox="0 0 12 12" stroke="#404040" strokeWidth="1.800"><path d="M0 1H12M0 6H12M0 11H12" /></svg>
      </NavBar>
      <PageBody>
        <Alert>School System Login</Alert>
        <FieldLabel>Enter Name:</FieldLabel>
        <Field aria-label="Name" />
        <Submit>submit</Submit>
      </PageBody>
    </Browser>
  );
}

export default function App() {
  return (
    <Screen>
      <Global />
      <TopPanel />
      <Body>
        <Dock />
        <WriterWindow />
      </Body>
      <Files />
      <BrowserWindow />
    </Screen>
  );
}
